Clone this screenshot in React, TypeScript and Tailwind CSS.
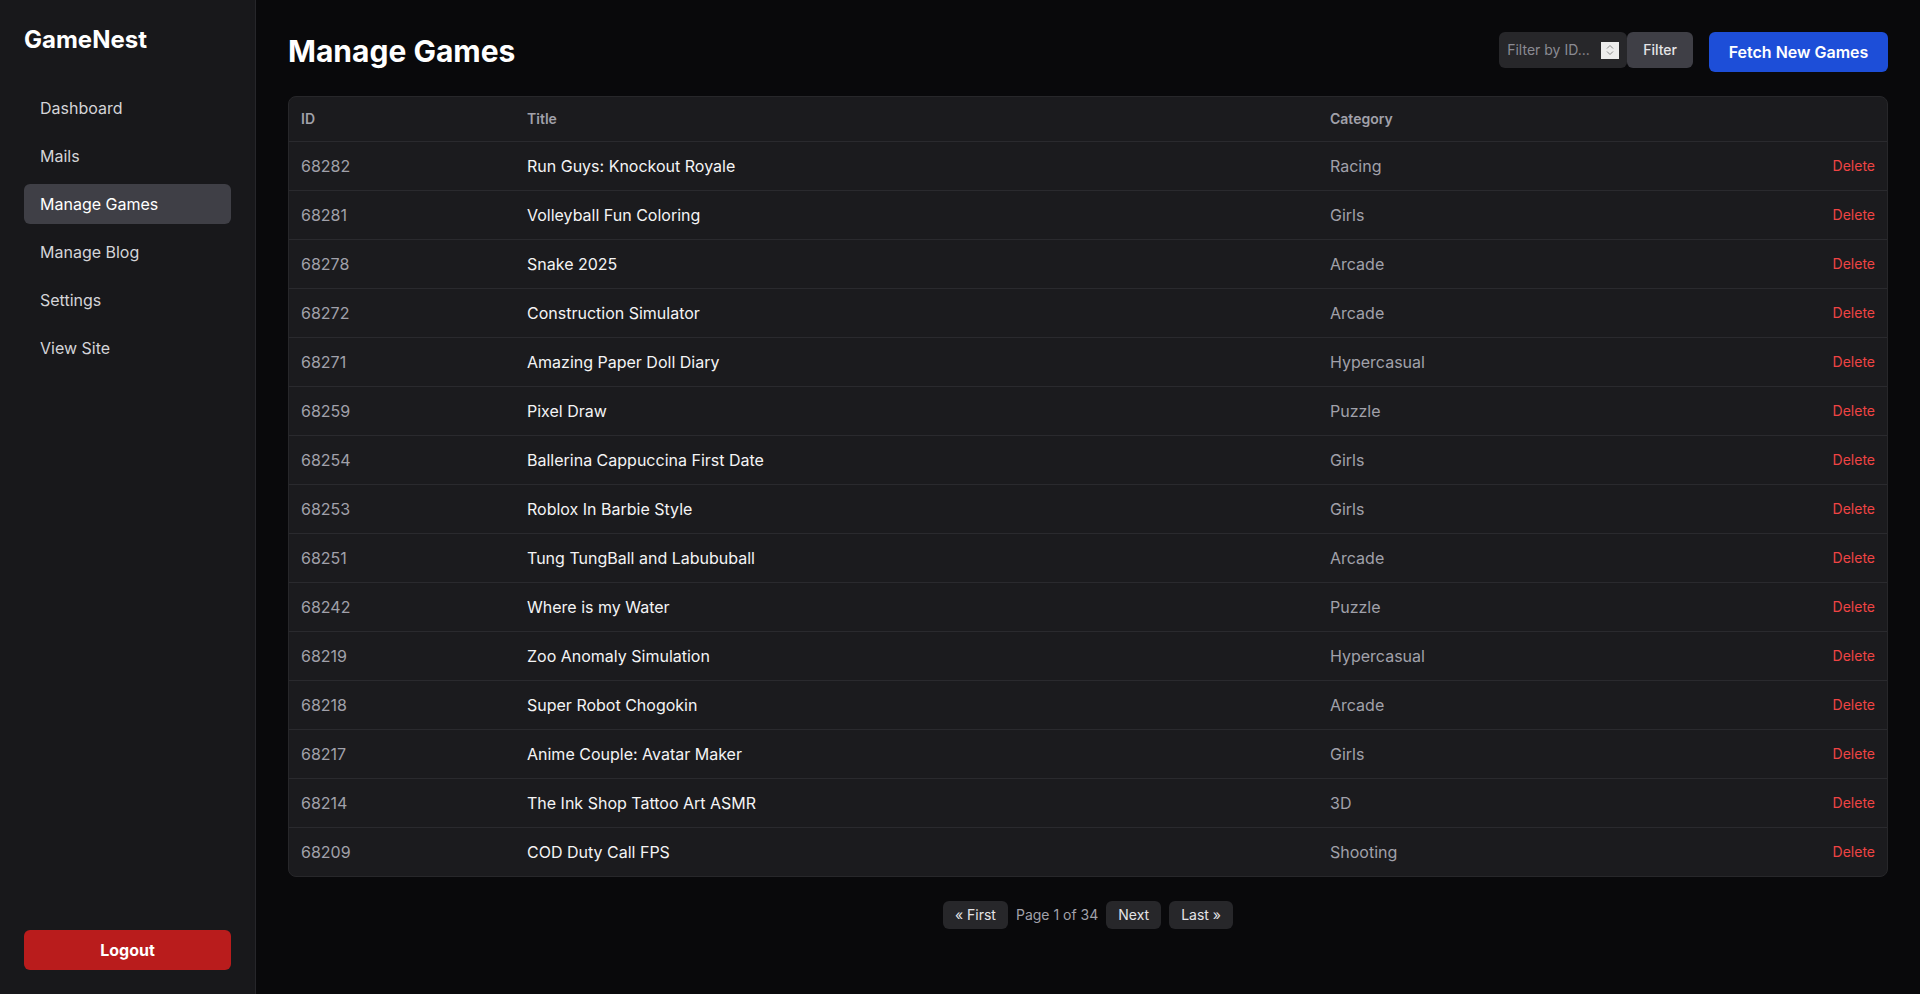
import React from "react";

const games: [string, string, string][] = [
  ["68282", "Run Guys: Knockout Royale", "Racing"],
  ["68281", "Volleyball Fun Coloring", "Girls"],
  ["68278", "Snake 2025", "Arcade"],
  ["68272", "Construction Simulator", "Arcade"],
  ["68271", "Amazing Paper Doll Diary", "Hypercasual"],
  ["68259", "Pixel Draw", "Puzzle"],
  ["68254", "Ballerina Cappuccina First Date", "Girls"],
  ["68253", "Roblox In Barbie Style", "Girls"],
  ["68251", "Tung TungBall and Labububall", "Arcade"],
  ["68242", "Where is my Water", "Puzzle"],
  ["68219", "Zoo Anomaly Simulation", "Hypercasual"],
  ["68218", "Super Robot Chogokin", "Arcade"],
  ["68217", "Anime Couple: Avatar Maker", "Girls"],
  ["68214", "The Ink Shop Tattoo Art ASMR", "3D"],
  ["68209", "COD Duty Call FPS", "Shooting"],
];

const nav = ["Dashboard", "Mails", "Manage Games", "Manage Blog", "Settings", "View Site"];

export default function App() {
  return (
    <div className="flex h-[994px] w-full bg-[#09090b] font-['Inter',sans-serif] text-white overflow-hidden">
      <aside className="flex w-64 shrink-0 flex-col justify-between border-r border-[#26262a] bg-[#18181b] p-6">
        <div>
          <h1 className="mb-8 text-2xl font-bold leading-8">GameNest</h1>
          <nav className="flex flex-col gap-2">
            {nav.map((n) => (
              <a
                key={n}
                className={
                  n === "Manage Games"
                    ? "flex h-10 items-center rounded-md bg-[#3f3f46] px-4 text-base text-white"
                    : "flex h-10 items-center rounded-md px-4 text-base text-[#d4d4d8]"
                }
              >
                {n}
              </a>
            ))}
          </nav>
        </div>
        <button className="h-10 w-full rounded-md bg-[#b91c1c] text-base font-bold text-white">Logout</button>
      </aside>

      <main className="flex-1 p-8">
        <div className="mb-6 flex items-start justify-between">
          <h2 className="mt-[1px] text-3xl font-bold leading-9">Manage Games</h2>
          <div className="flex items-start gap-4">
            <div className="flex">
              <div className="flex h-9 w-32 items-center rounded-md bg-[#27272a] pl-2 pr-2">
                <span className="flex-1 text-sm text-[#8b8b93]">Filter by ID...</span>
                <span className="flex h-[17px] w-[18px] flex-col items-center justify-center bg-[#ececec] text-[#777]">
                  <svg width="8" height="12" viewBox="0 0 8 12" fill="none" stroke="#8a8a8a" strokeWidth="1">
                    <path d="M1 4.5 L4 1.5 L7 4.5" />
                    <path d="M1 7.5 L4 10.5 L7 7.5" />
                  </svg>
                </span>
              </div>
              <button className="h-9 rounded-md bg-[#3f3f46] px-4 text-sm font-medium text-[#e4e4e7]">Filter</button>
            </div>
            <button className="h-10 w-[179px] rounded-md bg-[#1d4ed8] text-base font-semibold text-white">
              Fetch New Games
            </button>
          </div>
        </div>

        <div className="overflow-hidden rounded-lg border border-[#27272a] bg-[#1b1b1e]">
          <table className="w-full table-fixed border-collapse text-left">
            <thead>
              <tr className="border-b border-[#2a2a2e]">
                <th className="w-[226px] px-3 py-3 text-sm font-semibold leading-5 text-[#a1a1aa]">ID</th>
                <th className="w-[803px] px-3 py-3 text-sm font-semibold leading-5 text-[#a1a1aa]">Title</th>
                <th className="px-3 py-3 text-sm font-semibold leading-5 text-[#a1a1aa]">Category</th>
                <th className="w-[68px] px-3 py-3"></th>
              </tr>
            </thead>
            <tbody>
              {games.map(([id, title, cat], i) => (
                <tr key={id} className={i > 0 ? "border-t border-[#2a2a2e]" : ""}>
                  <td className="px-3 py-3 text-base leading-6 text-[#a1a1aa]">{id}</td>
                  <td className="px-3 py-3 text-base leading-6 text-[#f4f4f5]">{title}</td>
                  <td className="px-3 py-3 text-base leading-6 text-[#a1a1aa]">{cat}</td>
                  <td className="px-3 py-3 text-right text-sm leading-6 text-[#ef4444]">Delete</td>
                </tr>
              ))}
            </tbody>
          </table>
        </div>

        <div className="mt-6 flex items-center justify-center gap-2">
          <button className="h-7 rounded-md bg-[#27272a] px-3 text-sm text-[#e4e4e7]">« First</button>
          <span className="text-sm text-[#a1a1aa]">Page 1 of 34</span>
          <button className="h-7 rounded-md bg-[#27272a] px-3 text-sm text-[#e4e4e7]">Next</button>
          <button className="h-7 rounded-md bg-[#27272a] px-3 text-sm text-[#e4e4e7]">Last »</button>
        </div>
      </main>
    </div>
  );
}
